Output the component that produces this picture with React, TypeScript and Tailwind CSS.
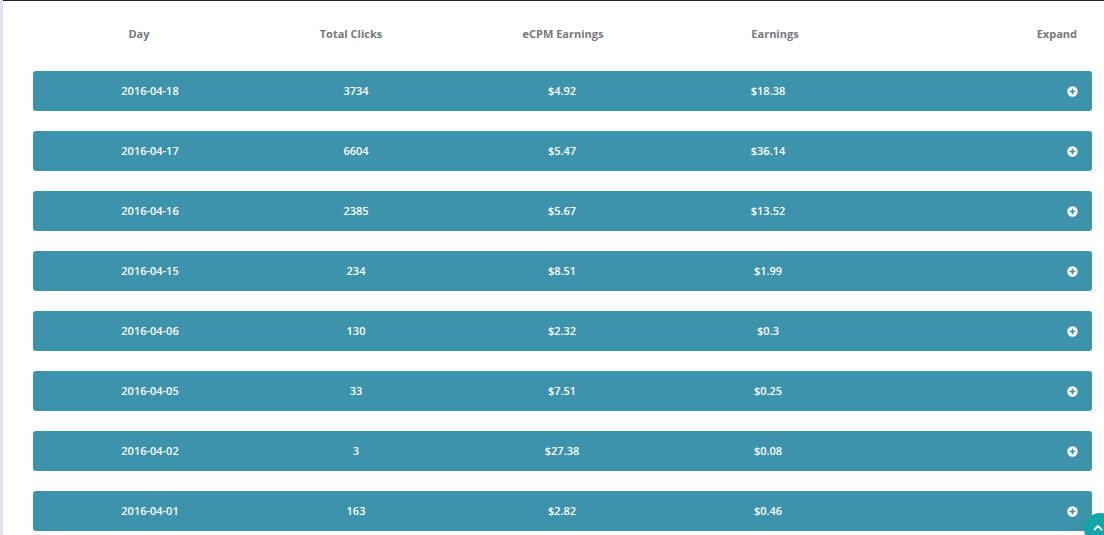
import React from "react";

const rows = [
  ["2016-04-18", "3734", "$4.92", "$18.38"],
  ["2016-04-17", "6604", "$5.47", "$36.14"],
  ["2016-04-16", "2385", "$5.67", "$13.52"],
  ["2016-04-15", "234", "$8.51", "$1.99"],
  ["2016-04-06", "130", "$2.32", "$0.3"],
  ["2016-04-05", "33", "$7.51", "$0.25"],
  ["2016-04-02", "3", "$27.38", "$0.08"],
  ["2016-04-01", "163", "$2.82", "$0.46"],
];

function PlusIcon() {
  return (
    <svg width="11" height="11" viewBox="0 0 11 11" className="block">
      <circle cx="5.5" cy="5.5" r="5.2" fill="#ffffff" />
      <path d="M5.5 3.2v4.6M3.2 5.5h4.6" stroke="#3c93ab" strokeWidth="1.6" strokeLinecap="round" />
    </svg>
  );
}

export default function App() {
  return (
    <div
      className="relative flex min-h-[535px] bg-white"
      style={{ fontFamily: '"Open Sans", "Liberation Sans", sans-serif' }}
    >
      <div className="w-[3px] shrink-0 bg-[#dde4ed]" />
      <div className="flex-1 border-t border-[#22262a] pl-[30px]">
        <div className="flex h-[66px] w-[1060px] items-center text-[11px] font-bold text-[#76787c]">
          <div className="w-[212px] text-center">Day</div>
          <div className="w-[212px] text-center">Total Clicks</div>
          <div className="w-[212px] text-center">eCPM Earnings</div>
          <div className="w-[212px] text-center">Earnings</div>
          <div className="w-[212px] pr-[16px] text-right">Expand</div>
        </div>
        <div className="mt-[4px] flex flex-col gap-[20px]">
          {rows.map((r) => (
            <div
              key={r[0]}
              className="flex h-[40px] w-[1059px] items-center rounded-[3px] bg-[#3c93ab] px-[14px] text-[11px] font-semibold text-white"
            >
              <div className="w-[206px] text-center">{r[0]}</div>
              <div className="w-[206px] text-center">{r[1]}</div>
              <div className="w-[206px] text-center">{r[2]}</div>
              <div className="w-[206px] text-center">{r[3]}</div>
              <div className="flex flex-1 justify-end">
                <PlusIcon />
              </div>
            </div>
          ))}
        </div>
      </div>
      <div className="fixed bottom-[-10px] right-[-12px] flex h-[32px] w-[32px] items-center justify-center rounded-full bg-[#12a6a6]">
        <svg width="10" height="7" viewBox="0 0 10 7" className="mr-[4px] mb-[4px]">
          <path d="M1.5 5.5L5 2l3.5 3.5" fill="none" stroke="#ffffff" strokeWidth="1.8" strokeLinecap="round" strokeLinejoin="round" />
        </svg>
      </div>
    </div>
  );
}
